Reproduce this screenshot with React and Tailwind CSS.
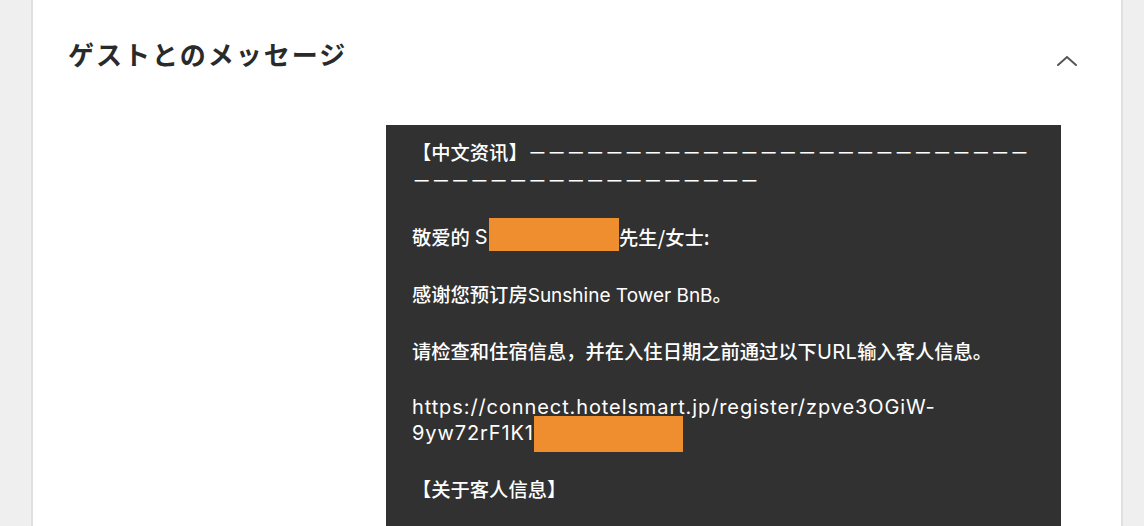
import React from "react";

const dashes1 = "－".repeat(26);
const dashes2 = "－".repeat(18);
const latin = "font-['Inter'] text-[20px] font-normal tracking-[0.4px]";
const latinSm = "font-['Inter'] text-[19px] font-normal tracking-[0px]";
const latinUrl = "font-['Inter'] text-[20px] font-normal tracking-[0.9px]";

export default function App() {
  return (
    <div className="w-[1144px] h-[526px] overflow-hidden bg-[#efefef] flex">
      <div className="ml-[31px] w-[1092px] h-[526px] bg-white border-x-2 border-[#e0e0e0] flex flex-col">
        <div className="flex items-start justify-between pl-[35px] pr-[43px] pt-[41px] h-[125px] shrink-0">
          <h2
            className="text-[26px] font-bold text-[#2a2a2a] tracking-[2px] leading-[26px]"
            style={{ fontFamily: '"Noto Sans CJK JP", "Noto Sans", sans-serif' }}
          >
            ゲストとのメッセージ
          </h2>
          <svg width="22" height="14" viewBox="0 0 22 14" className="mt-[13px]">
            <path d="M2 11 L11 3 L20 11" fill="none" stroke="#555" strokeWidth="2" strokeLinecap="round" />
          </svg>
        </div>
        <div className="flex flex-1 pl-[353px]">
          <div
            className="w-[675px] h-[420px] bg-[#313131] text-white pt-[14px] pl-[26px] pr-[20px] text-[19.3px] font-medium whitespace-nowrap"
            style={{ fontFamily: '"Noto Sans CJK SC", "Noto Sans", sans-serif' }}
          >
            <div className="h-[27px] leading-[27px]">【中文资讯】{dashes1}</div>
            <div className="h-[28.5px] leading-[28.5px]">{dashes2}</div>
            <div className="h-[28.5px]" />
            <div className="h-[28.5px] leading-[28.5px] flex items-center">
              <span>敬爱的</span>
              <span className={latin + " ml-[5px]"}>S</span>
              <span className="inline-block w-[130px] h-[33px] bg-[#ee8e2e] ml-[1px] mb-[5px]" />
              <span>先生/女士:</span>
            </div>
            <div className="h-[28.5px]" />
            <div className="h-[28.5px] leading-[28.5px]">
              感谢您预订房<span className={latinSm}>Sunshine Tower BnB</span>。
            </div>
            <div className="h-[28.5px]" />
            <div className="h-[28.5px] leading-[28.5px]">
              请检查和住宿信息，并在入住日期之前通过以下<span className={latin}>URL</span>输入客人信息。
            </div>
            <div className="h-[28.5px]" />
            <div className={"h-[26px] leading-[26px] " + latinUrl}>https://connect.hotelsmart.jp/register/zpve3OGiW-</div>
            <div className="h-[26px] leading-[26px] flex items-center">
              <span className={latinUrl}>9yw72rF1K1/</span>
              <span className="inline-block -ml-[8px] w-[149px] h-[36px] bg-[#ee8e2e] mt-[2px]" />
            </div>
            <div className="h-[28.5px]" />
            <div className="h-[28.5px] leading-[28.5px]">【关于客人信息】</div>
          </div>
        </div>
      </div>
    </div>
  );
}
